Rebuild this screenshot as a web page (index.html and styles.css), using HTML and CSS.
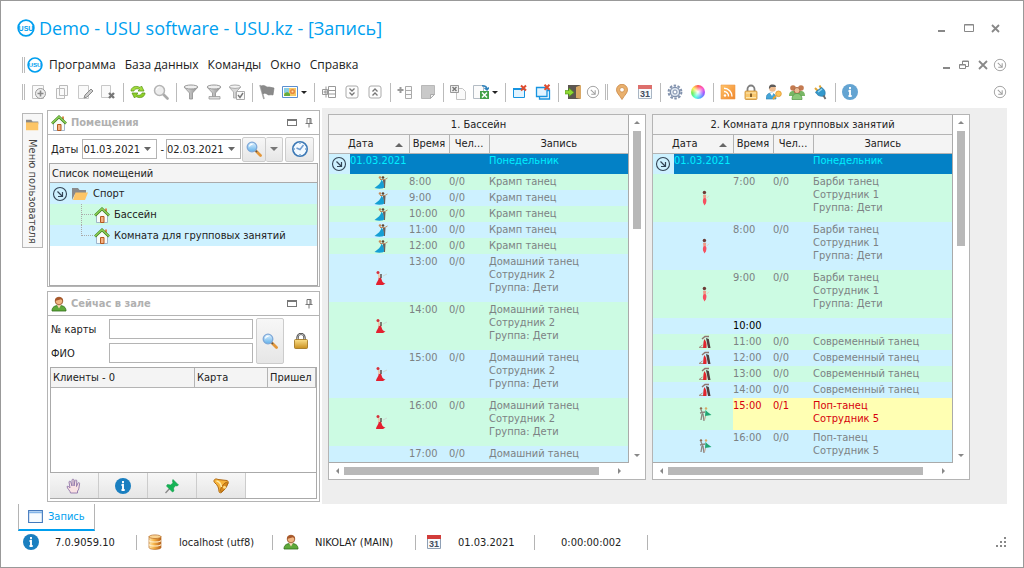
FILE: index.html
```html
<!DOCTYPE html>
<html lang="ru">
<head>
	<meta charset="utf-8">
	<title>Demo - USU software - USU.kz - [Запись]</title>
	<link rel="stylesheet" href="styles.css">
</head>
<body>
	<!-- icon set -->
	<svg class="sprite" aria-hidden="true">
		<defs>
			<linearGradient id="gGold" x1="0" y1="0" x2="0" y2="1"><stop offset="0" stop-color="#fbe08a"/><stop offset="1" stop-color="#c98f1e"/></linearGradient>
			<linearGradient id="gOrange" x1="0" y1="0" x2="1" y2="1"><stop offset="0" stop-color="#ffc46b"/><stop offset="1" stop-color="#f0862b"/></linearGradient>
			<linearGradient id="gDb" x1="0" y1="0" x2="1" y2="0"><stop offset="0" stop-color="#ffe9b8"/><stop offset=".4" stop-color="#f8b548"/><stop offset="1" stop-color="#b9601a"/></linearGradient>
			<linearGradient id="gGrey" x1="0" y1="0" x2="1" y2="0"><stop offset="0" stop-color="#e8e8e8"/><stop offset="1" stop-color="#8c8c8c"/></linearGradient>
			<linearGradient id="gLens" x1="0" y1="0" x2="0" y2="1"><stop offset="0" stop-color="#e4f4ff"/><stop offset="1" stop-color="#5fb0ea"/></linearGradient>
		</defs>
		<symbol id="add" viewBox="0 0 16 16"><path d="M1.5 1.5h11v13h-11z" fill="#fafafa" stroke="#c4c4c4"/><circle cx="9.500" cy="9.500" r="5" fill="#eee" stroke="#999"/><path d="M9.500 6.500v6M6.500 9.500h6" stroke="#8a8a8a" stroke-width="1.600"/></symbol>
		<symbol id="copy" viewBox="0 0 16 16"><path d="M5.500 1.500h8v10h-8zM2.500 4.500h8v10h-8z" fill="#fafafa" stroke="#bbb"/></symbol>
		<symbol id="edit" viewBox="0 0 16 16"><path d="M1.500 1.500h10v13h-10z" fill="#fafafa" stroke="#c8c8c8"/><path d="M7 14l1-3 6-6 2 2-6 6z" fill="#ccc" stroke="#8a8a8a"/></symbol>
		<symbol id="del" viewBox="0 0 16 16"><path d="M1.500 1.500h9v12h-9z" fill="#fafafa" stroke="#c8c8c8"/><path d="M9 9l5 5M14 9l-5 5" stroke="#777" stroke-width="2.400"/></symbol>
		<symbol id="refresh" viewBox="0 0 16 16"><path d="M1 7c0-4 5-6 9-3.500L11.500 2 14 7H8l1.500-1.500C7 4 4.500 5 4 7z" fill="#a5dc3c" stroke="#5d9c1c" stroke-width=".8"/><path d="M15 9c0 4-5 6-9 3.500L4.500 14 2 9h6l-1.500 1.500C9 12 11.500 11 12 9z" fill="#8fcf28" stroke="#5d9c1c" stroke-width=".8"/></symbol>
		<symbol id="find-grey" viewBox="0 0 16 16"><path d="M10.500 10.500l4 4" stroke="#aaa" stroke-width="2.600" stroke-linecap="round"/><circle cx="6.500" cy="6.500" r="5" fill="#ededed" stroke="#b5b5b5" stroke-width="1.500"/><path d="M3.500 6a3 3 0 0 1 3-3" stroke="#fff" fill="none"/></symbol>
		<symbol id="find" viewBox="0 0 16 16"><path d="M9.500 9.500l5 5" stroke="#e3973a" stroke-width="2.800" stroke-linecap="round"/><path d="M9 9l2 2" stroke="#555" stroke-width="1.500"/><circle cx="6" cy="6" r="4.800" fill="url(#gLens)" stroke="#7fa8d8" stroke-width="1.300"/><path d="M3.500 5.500a2.500 2.500 0 0 1 3-2" stroke="#fff" fill="none" stroke-width="1.200"/></symbol>
		<symbol id="funnel" viewBox="0 0 16 16"><path d="M1 3l5.500 6v6h3V9L15 3z" fill="url(#gGrey)" stroke="#8f8f8f" stroke-width=".8"/><ellipse cx="8" cy="3" rx="6.800" ry="2" fill="#efefef" stroke="#999"/></symbol>
		<symbol id="funnel-x" viewBox="0 0 16 16"><path d="M1 3l5.500 6v4h3V9L15 3z" fill="url(#gGrey)" stroke="#8f8f8f" stroke-width=".8"/><ellipse cx="8" cy="3" rx="6.800" ry="2" fill="#efefef" stroke="#999"/><path d="M3 12.500h11v2.500H3z" fill="#ddd" stroke="#999" stroke-width=".8"/></symbol>
		<symbol id="funnel-v" viewBox="0 0 16 16"><path d="M0 3l4.500 5v6h2.500V8L12 3z" fill="#d8d8d8" stroke="#a5a5a5" stroke-width=".8"/><ellipse cx="6" cy="2.700" rx="5.500" ry="1.700" fill="#f4f4f4" stroke="#aaa"/><path d="M7.500 7.500h8v8h-8z" fill="#fafafa" stroke="#aaa"/><path d="M9 11l2 2.500 3-4.500" fill="none" stroke="#777" stroke-width="1.400"/></symbol>
		<symbol id="flag" viewBox="0 0 16 16"><path d="M1 1l4 14" stroke="#a5a5a5" stroke-width="1.600"/><path d="M2 2c4-2 5 2 8 1l5 1-1 7c-3-1-4 1-6-1-2-1-3-1-4 0z" fill="#8a8a8a" stroke="#777" stroke-width=".6"/></symbol>
		<symbol id="image" viewBox="0 0 16 16"><path d="M.5 2.500h15v11H.5z" fill="#fff" stroke="#5b8fd0"/><path d="M2 4h12v8H2z" fill="#f5c863"/><path d="M2 4h5v5H2z" fill="#8ccfe4"/><path d="M2 12c0-4 4-5 6-2v2z" fill="#64ad3d"/><circle cx="10.500" cy="7.500" r="2.600" fill="#e88a45"/><circle cx="10.500" cy="7.500" r="1" fill="#ffe0a0"/></symbol>
		<symbol id="tree-plus" viewBox="0 0 16 16"><path d="M7.500 2.500h7v11h-7zM7.500 6.500h7M7.500 10h7M5 2.500v11M1.500 5.500h5v5h-5zM2.500 8h3M4 6.500v3" fill="none" stroke="#999"/></symbol>
		<symbol id="down2" viewBox="0 0 16 16"><rect x="2" y="2" width="12" height="12" rx="2" fill="#fdfdfd" stroke="#aaa"/><path d="M5.500 4.500L8 7l2.500-2.500M5.500 8.500L8 11l2.500-2.500" fill="none" stroke="#777" stroke-width="1.300"/></symbol>
		<symbol id="up2" viewBox="0 0 16 16"><rect x="2" y="2" width="12" height="12" rx="2" fill="#fdfdfd" stroke="#aaa"/><path d="M5.500 7.500L8 5l2.500 2.500M5.500 11.500L8 9l2.500 2.500" fill="none" stroke="#777" stroke-width="1.300"/></symbol>
		<symbol id="plus-list" viewBox="0 0 16 16"><path d="M3.500 3v6M.5 6h6" stroke="#999" stroke-width="2"/><path d="M8.500 2.500h6v12h-6zM8.500 6.500h6M8.500 10.500h6" fill="#fafafa" stroke="#aaa"/></symbol>
		<symbol id="note" viewBox="0 0 16 16"><path d="M1.500 1.500h13v9l-4 4h-9z" fill="#c9c9c9" stroke="#b8b8b8"/><path d="M14.500 10.500h-4v4z" fill="#f0f0f0" stroke="#aaa"/></symbol>
		<symbol id="xls-grey" viewBox="0 0 16 16"><path d="M6.500 4.500h6l3 3v8h-9z" fill="#fafafa" stroke="#c4c4c4"/><path d="M.5 1.500h8v7h-8z" fill="#eee" stroke="#999"/><path d="M2.500 3l4 4M6.500 3l-4 4" stroke="#777" stroke-width="1.400"/></symbol>
		<symbol id="xls" viewBox="0 0 16 16"><path d="M.5 1.500h10v13H.5z" fill="#fbfbfb" stroke="#b4bcc4"/><path d="M9 1.800c3 0 5 1 5 3.700M11.500 4l2.500 2 2-2.500" fill="none" stroke="#3183bd" stroke-width="1.500"/><path d="M7 7h9v8H7z" fill="#43a047"/><path d="M9 8.500l5 5M14 8.500l-5 5" stroke="#fff" stroke-width="1.500"/></symbol>
		<symbol id="win-x" viewBox="0 0 16 16"><path d="M1.500 5h11v8.500h-11z" fill="#e2f4ff" stroke="#1794e0"/><path d="M1 5h12" stroke="#1794e0" stroke-width="2"/><path d="M9 1.500l5 5M14 1.500l-5 5" stroke="#de4c2f" stroke-width="2"/></symbol>
		<symbol id="wins-x" viewBox="0 0 16 16"><path d="M4.500 6.500h10v8.500h-10z" fill="#fff" stroke="#1794e0" stroke-width="1.300"/><path d="M1.500 3.500h10.500v9H1.500z" fill="#e2f4ff" stroke="#1794e0" stroke-width="1.300"/><path d="M9.500.8l5 5M14.500.8l-5 5" stroke="#de4c2f" stroke-width="2"/></symbol>
		<symbol id="exit" viewBox="0 0 16 16"><path d="M3 1h12v14H3z" fill="#5c5650"/><path d="M11 3l5-2v14l-5-1z" fill="#d9a866"/><path d="M0 6.500h4V4l5 4.500-5 4V10H0z" fill="#8ed832" stroke="#4e9414" stroke-width=".6"/></symbol>
		<symbol id="arrow-se" viewBox="0 0 16 16"><circle cx="8" cy="8" r="6.500" fill="none" stroke="currentColor" stroke-width="1.100"/><path d="M5.500 5.500l4.500 4.500M10.500 6v4.500H6" fill="none" stroke="currentColor" stroke-width="1.200"/></symbol>
		<symbol id="pin-map" viewBox="0 0 16 16"><path d="M8 15.500C5 10.500 2.500 9 2.500 5.800a5.500 5.500 0 0 1 11 0C13.500 9 11 10.500 8 15.500z" fill="#e9b06d" stroke="#c98744" stroke-width=".8"/><circle cx="8" cy="5.800" r="2.300" fill="#fff" stroke="#c98744" stroke-width=".7"/></symbol>
		<symbol id="gear" viewBox="0 0 16 16"><circle cx="8" cy="8" r="6.400" fill="none" stroke="#8292ad" stroke-width="2" stroke-dasharray="2.500 1.500"/><circle cx="8" cy="8" r="4.700" fill="#dde5ef" stroke="#7f90ad" stroke-width="1.300"/><circle cx="8" cy="8" r="2" fill="#fff" stroke="#7f90ad"/></symbol>
		<symbol id="rss" viewBox="0 0 16 16"><path d="M1 1h14v14H1z" fill="url(#gOrange)" stroke="#ee9c4a" stroke-width=".6"/><circle cx="5" cy="11.500" r="1.200" fill="#fff"/><path d="M4 7.500a4.500 4.500 0 0 1 4.500 5M4 4.300a8 8 0 0 1 8 8.200" fill="none" stroke="#fff" stroke-width="1.400"/></symbol>
		<symbol id="lock" viewBox="0 0 16 16"><path d="M4.500 8V5a3.500 3.500 0 0 1 7 0v3" fill="none" stroke="#7e7e7e" stroke-width="1.800"/><rect x="2" y="7" width="12" height="8.500" rx="1" fill="#f8c66c" stroke="#c98d32" stroke-width=".8"/><path d="M3 9h10M3 13.500h10" stroke="#fde7b0"/><path d="M8 9.500v3.500" stroke="#7a5520" stroke-width="1.800"/></symbol>
		<symbol id="lock-gold" viewBox="0 0 16 16"><path d="M4.500 8V4.500a3.500 3.500 0 0 1 7 0V8" fill="none" stroke="#333" stroke-width="2.200"/><path d="M4.500 8V4.500a3.500 3.500 0 0 1 7 0V8" fill="none" stroke="#ddd" stroke-width=".8"/><rect x="1.500" y="6.500" width="13" height="9" rx="1" fill="url(#gGold)" stroke="#9b6f18" stroke-width=".8"/></symbol>
		<symbol id="user-key" viewBox="0 0 16 16"><path d="M0 15c0-4 2-6 5-6s5 2 5 6z" fill="#45a5d8" stroke="#2d7fae" stroke-width=".6"/><path d="M4 9l2 3 1.500-3z" fill="#fff"/><circle cx="6.500" cy="4.500" r="3.300" fill="#eebc90"/><path d="M3 5c-.5-4 2-5 4-4.500 2 0 3 1 3 2.500L5 3z" fill="#5d5b5a"/><path d="M10 12l-3 3" stroke="#e6a532" stroke-width="2"/><circle cx="12.500" cy="9.800" r="2.800" fill="#ffc55a" stroke="#dd942c" stroke-width=".8"/></symbol>
		<symbol id="users" viewBox="0 0 16 16"><circle cx="4" cy="4" r="2.800" fill="#c47a50"/><circle cx="12" cy="4" r="2.800" fill="#c47a50"/><path d="M0 12c0-4 2-5 4-5h8c2 0 4 1 4 5z" fill="#78b665"/><circle cx="8" cy="6.500" r="3" fill="#eebb95" stroke="#a96743"/><path d="M3 15.500c0-4 2-6 5-6s5 2 5 6z" fill="#8bc878" stroke="#4d9442" stroke-width=".7"/></symbol>
		<symbol id="plug" viewBox="0 0 16 16"><path d="M3 4l3 3M7.500 1.500l2 3.500" stroke="#e2a736" stroke-width="2"/><path d="M3.500 8l6-4.500c3.500 2 4.500 5 3 8.500-4 1-7.500-.5-9-4z" fill="#3399cc" stroke="#2470a0" stroke-width=".7"/><path d="M6 8l4-3" stroke="#9bd8ef" stroke-width="1.500"/><path d="M11.500 11.500l2 3.500" stroke="#6c6c6c" stroke-width="1.800"/></symbol>
		<symbol id="info" viewBox="0 0 16 16"><circle cx="8" cy="8" r="8" fill="currentColor"/><path d="M8 3v2.200M6.500 7H8v5M6.500 12h3.200" fill="none" stroke="#fff" stroke-width="1.900"/></symbol>
		<symbol id="house" viewBox="0 0 16 16"><path d="M2.500 8v7.500h11V8L8 3z" fill="#f8fbf8" stroke="#8fa4c0" stroke-width=".8"/><path d="M11 1.500h2V5h-2z" fill="#d98951"/><path d="M1 8.500L8 1.800l7 6.700" fill="none" stroke="#438321" stroke-width="2.600"/><path d="M1 8.200l7-6.500 7 6.500" fill="none" stroke="#8ed257" stroke-width="1.300"/><path d="M6.500 9.500h3.500v6H6.500z" fill="#f4b183" stroke="#b45a1f"/></symbol>
		<symbol id="folder" viewBox="0 0 18 16"><path d="M1 2h6l1.500 2H15v4H1z" fill="#8a8a8a"/><path d="M1 2v12l3-6z" fill="#8a8a8a"/><path d="M4.500 6.500H17L14 14H2z" fill="#fdc566"/></symbol>
		<symbol id="folder2" viewBox="0 0 16 12"><path d="M0 0h6l1.500 2H14v3H0z" fill="#8a8a8a"/><path d="M0 3h14v9H0z" fill="#fdc566"/></symbol>
		<symbol id="user" viewBox="0 0 16 16"><path d="M1 15c0-4 2.500-5.500 7-5.500S15 11 15 15z" fill="#5fa93a" stroke="#2e6c16" stroke-width=".8"/><path d="M6 9h4l-2 3.500z" fill="#f8d9b6"/><circle cx="8" cy="5" r="3.800" fill="#f1b583" stroke="#8d4a20" stroke-width=".8"/><path d="M4 5C3.500 0 12.500 0 12 5L10 3.200z" fill="#a8572a"/></symbol>
		<symbol id="clock" viewBox="0 0 18 18"><circle cx="9" cy="9" r="7.200" fill="#f2f9ff" stroke="#3b78b5" stroke-width="1.600"/><path d="M12.500 5L9 9.500 5.500 8" fill="none" stroke="#6f9cd0" stroke-width="1.500"/><path d="M9 3v1M9 14v1M3 9h1M14 9h1" stroke="#3b78b5"/></symbol>
		<symbol id="hand" viewBox="0 0 16 16"><path d="M4.500 15c0-2-3.500-4.500-3.500-6.500 1.200-.8 2 .5 3 1.500L3 4c.2-1.200 1.600-1 1.800 0L6 8V2c.3-1.200 1.700-1.200 2 0v6l1-5.500c.5-1 1.800-.7 1.800.5L10.500 8.500 12 5c.7-.8 1.800-.3 1.600.7C13 9 13 12 11.500 13v2z" fill="#f9e2e4" stroke="#8f74a8" stroke-width=".9"/></symbol>
		<symbol id="pushpin" viewBox="0 0 16 16"><path d="M1.500 15L7 9" stroke="#888" stroke-width="1.300"/><path d="M9 1.500l5.500 5.500-1.500 1-1.500-.3-2 2.300.4 3-1.400 1L2.500 8l1-1.500 3 .5 2.500-2-.5-2z" fill="#14b455" stroke="#0f9a48" stroke-width=".6"/></symbol>
		<symbol id="bell" viewBox="0 0 16 16"><path d="M1 2.500C1.500.8 3.500.5 5 1.500l9 1c1.500.7 1.500 2 1 3.200L9 14c-1 1.300-2.800 1-3-.5C6 10 4.500 7 2 5 1 4.200.8 3.300 1 2.500z" fill="#f6b33a" stroke="#b06a14"/><ellipse cx="11" cy="9" rx="5.600" ry="2" transform="rotate(-55 11 9)" fill="#d98a1c" stroke="#a66412" stroke-width=".8"/><circle cx="11.500" cy="9.300" r="1.500" fill="#ffe08a"/><path d="M3.500 3c3 .5 4.500 3 5 6" stroke="#ffeaa6" stroke-width="1.500" fill="none"/></symbol>
		<symbol id="db" viewBox="0 0 16 16"><path d="M2 2.500v11c0 2.500 12 2.500 12 0v-11z" fill="url(#gDb)" stroke="#b56a22" stroke-width=".7"/><ellipse cx="8" cy="2.700" rx="6" ry="1.800" fill="#fbd593" stroke="#b56a22" stroke-width=".7"/><path d="M2 6.500c1 2 11 2 12 0M2 10.500c1 2 11 2 12 0" fill="none" stroke="#fff1cf" stroke-width="1.200"/></symbol>
		<symbol id="form" viewBox="0 0 16 14"><path d="M.6.600h14.800v12.800H.6z" fill="#f6fbff" stroke="#4379bd" stroke-width="1.200"/><path d="M1 2.500h14" stroke="#82b4e8" stroke-width="2"/></symbol>
		<symbol id="pin-small" viewBox="0 0 8 10"><path d="M2 .500h4v5M2 .500v5M5 .500v5M.5 5.500h7M4 5.500V9.500" fill="none" stroke="#777"/></symbol>
		<symbol id="dance1" viewBox="0 0 14 14"><path d="M9 5l2.500 0L11 13H9.500z" fill="#6a5f5a"/><path d="M7.500 4.500C7 8 4 10.500.5 13c4 1 8 1 9.500-.5C10 9 9.500 7 7.500 4.500z" fill="#159fd4"/><circle cx="6" cy="2.500" r="1.300" fill="#c98a55"/><circle cx="9" cy="2.500" r="1.300" fill="#5d4330"/><path d="M6 4.500h5l2.500-1.500" stroke="#b58c68" fill="none"/></symbol>
		<symbol id="dance2" viewBox="0 0 14 16"><path d="M4.500 7.500c.5 3-2 4-2.500 7.500h7l2.500-1.500C8.500 13 8 11 7 7.500z" fill="#e3202f"/><path d="M4.500 4L5.500 8" stroke="#edc4a8" stroke-width="1.800"/><circle cx="4" cy="2.500" r="1.500" fill="#d6303a"/><path d="M7 4v4" stroke="#5a4540" stroke-width="1.400"/><path d="M9 6l4-2" stroke="#d0d8d4"/></symbol>
		<symbol id="dance3" viewBox="0 0 8 14"><circle cx="3.500" cy="2.200" r="1.500" fill="#6d3b36"/><path d="M2.300 4.200h2.700L4.700 8H2.600z" fill="#f09a88"/><path d="M3.800 7c1.600 0 1.800 2.500 1 4.500L3.500 13.500 2.300 11C1.800 9 2.300 7 3.800 7z" fill="#f65060"/><path d="M5.500 7l2-2" stroke="#e5c5b5" stroke-width=".7"/></symbol>
		<symbol id="dance4" viewBox="0 0 14 14"><path d="M8 3l2.800 1L12.500 13h-2.500z" fill="#4f403f"/><path d="M6.500 4c1 2 2.500 3 2 9H5C5.500 9 5 7 6.500 4z" fill="#e0252d"/><path d="M4 4l3-2.500h4" stroke="#907570" stroke-width="1.500" fill="none"/><path d="M4.500 10L1 12.500h4" stroke="#a49888" fill="none"/></symbol>
		<symbol id="dance5" viewBox="0 0 14 16"><path d="M3 4l2 4M2 7l5-1M4 8l-1 6M5 8l1 7" stroke="#8c8580" stroke-width="1.300"/><circle cx="3" cy="2.500" r="1.200" fill="#8b6a50"/><circle cx="8" cy="2.500" r="1.200" fill="#d6aa66"/><path d="M7.500 4l2 2 4 3L7 10z" fill="#20a673"/><path d="M7.500 10l-1 4" stroke="#c1a18c"/></symbol>
	</svg>

	<header class="titlebar">
		<svg class="icon18" viewBox="0 0 18 18"><circle cx="9" cy="9" r="7.800" fill="#fff" stroke="#009fef" stroke-width="1.800"/><text x="9" y="11.500" text-anchor="middle" class="logo-text">USU</text></svg>
		<h1>Demo - USU software - USU.kz - [Запись]</h1>
		<div class="winbtns">
			<button type="button" aria-label="Свернуть"><svg viewBox="0 0 10 10"><path d="M1 8h7" stroke-width="2"/></svg></button>
			<button type="button" aria-label="Развернуть"><svg viewBox="0 0 10 10"><path d="M.5 1.500h9v7h-9zM.5 2h9"/></svg></button>
			<button type="button" aria-label="Закрыть"><svg viewBox="0 0 10 10"><path d="M1 2l7 7M8 2L1 9" stroke-width="1.800"/></svg></button>
		</div>
	</header>

	<nav class="menu">
		<span class="grip"></span>
		<svg class="icon16" viewBox="0 0 18 18"><circle cx="9" cy="9" r="7.800" fill="#fff" stroke="#009fef" stroke-width="1.800"/><text x="9" y="11.500" text-anchor="middle" class="logo-text">USU</text></svg>
		<a href="#">Программа</a>
		<a href="#">База данных</a>
		<a href="#">Команды</a>
		<a href="#">Окно</a>
		<a href="#">Справка</a>
		<div class="mdibtns">
			<button type="button" aria-label="Свернуть окно"><svg viewBox="0 0 10 10"><path d="M3 8h7" stroke-width="2"/></svg></button>
			<button type="button" aria-label="Восстановить окно"><svg viewBox="0 0 10 10"><path d="M.5 4.500h6v4h-6zM3.500 4V1h6v5.500H7M3.500 1.500h6M.5 5h6"/></svg></button>
			<button type="button" aria-label="Закрыть окно"><svg viewBox="0 0 10 10"><path d="M1 1l8 8M9 1L1 9" stroke-width="1.800"/></svg></button>
			<button type="button" class="more" aria-label="Ещё"><svg><use href="#arrow-se"/></svg></button>
		</div>
	</nav>

	<div class="toolbar">
		<span class="grip"></span>
		<button type="button" aria-label="Добавить"><svg><use href="#add"/></svg></button>
		<button type="button" aria-label="Копировать"><svg><use href="#copy"/></svg></button>
		<button type="button" aria-label="Изменить"><svg><use href="#edit"/></svg></button>
		<button type="button" aria-label="Удалить"><svg><use href="#del"/></svg></button>
		<span class="sep"></span>
		<button type="button" aria-label="Обновить"><svg><use href="#refresh"/></svg></button>
		<button type="button" aria-label="Поиск"><svg><use href="#find-grey"/></svg></button>
		<span class="sep"></span>
		<button type="button" aria-label="Фильтр"><svg><use href="#funnel"/></svg></button>
		<button type="button" aria-label="Фильтр по значению"><svg><use href="#funnel-x"/></svg></button>
		<button type="button" aria-label="Применить фильтр"><svg><use href="#funnel-v"/></svg></button>
		<span class="sep"></span>
		<button type="button" aria-label="Флаг"><svg><use href="#flag"/></svg></button>
		<button type="button" class="drop" aria-label="Изображение"><svg><use href="#image"/></svg></button>
		<span class="sep"></span>
		<button type="button" aria-label="Группировка"><svg><use href="#tree-plus"/></svg></button>
		<button type="button" aria-label="Развернуть все"><svg><use href="#down2"/></svg></button>
		<button type="button" aria-label="Свернуть все"><svg><use href="#up2"/></svg></button>
		<span class="sep"></span>
		<button type="button" aria-label="Добавить строку"><svg><use href="#plus-list"/></svg></button>
		<button type="button" aria-label="Заметка"><svg><use href="#note"/></svg></button>
		<span class="sep"></span>
		<button type="button" aria-label="Импорт"><svg><use href="#xls-grey"/></svg></button>
		<button type="button" class="drop" aria-label="Экспорт"><svg><use href="#xls"/></svg></button>
		<span class="sep"></span>
		<button type="button" aria-label="Закрыть вкладку"><svg><use href="#win-x"/></svg></button>
		<button type="button" aria-label="Закрыть все вкладки"><svg><use href="#wins-x"/></svg></button>
		<span class="sep"></span>
		<button type="button" aria-label="Выход"><svg><use href="#exit"/></svg></button>
		<button type="button" class="more" aria-label="Ещё"><svg><use href="#arrow-se"/></svg></button>
		<span class="grip"></span>
		<button type="button" aria-label="Карта"><svg><use href="#pin-map"/></svg></button>
		<button type="button" aria-label="Календарь"><svg viewBox="0 0 16 16"><path d="M1.500 2.500h13v12h-13z" fill="#f7fafd" stroke="#a9b5c3"/><path d="M1 1h14v4H1z" fill="#dd6f6c"/><text x="8" y="13" text-anchor="middle" class="cal-text">31</text></svg></button>
		<span class="sep"></span>
		<button type="button" aria-label="Настройки"><svg><use href="#gear"/></svg></button>
		<button type="button" aria-label="Цвета"><span class="wheel"></span></button>
		<span class="sep"></span>
		<button type="button" aria-label="Новости"><svg><use href="#rss"/></svg></button>
		<button type="button" aria-label="Блокировка"><svg><use href="#lock"/></svg></button>
		<button type="button" aria-label="Права доступа"><svg><use href="#user-key"/></svg></button>
		<button type="button" aria-label="Пользователи"><svg><use href="#users"/></svg></button>
		<button type="button" aria-label="Подключение"><svg><use href="#plug"/></svg></button>
		<span class="sep"></span>
		<button type="button" class="info" aria-label="О программе"><svg><use href="#info"/></svg></button>
		<button type="button" class="more last" aria-label="Ещё"><svg><use href="#arrow-se"/></svg></button>
	</div>

	<main class="work">
		<button type="button" class="side-tab"><svg><use href="#folder2"/></svg><span>Меню пользователя</span></button>

		<aside class="docks">
			<section class="dock rooms">
				<div class="dock-head">
					<svg class="icon16"><use href="#house"/></svg>
					<h2>Помещения</h2>
					<span class="box"></span>
					<svg class="pin"><use href="#pin-small"/></svg>
				</div>
				<div class="dates">
					<label for="from">Даты</label>
					<select id="from"><option>01.03.2021</option></select>
					<label for="to">-</label>
					<select id="to"><option>02.03.2021</option></select>
					<div class="split">
						<button type="button" class="btn" aria-label="Найти"><svg class="icon16"><use href="#find"/></svg></button>
						<button type="button" class="btn arrow" aria-label="Варианты поиска"><span class="caret"></span></button>
					</div>
					<button type="button" class="btn clock" aria-label="Сейчас"><svg class="icon18"><use href="#clock"/></svg></button>
				</div>
				<div class="tree">
					<div class="tree-head">Список помещений</div>
					<ul>
						<li class="root"><svg class="icon16"><use href="#arrow-se"/></svg><svg class="icon18"><use href="#folder"/></svg>Спорт</li>
						<li class="leaf"><span class="branch"></span><svg class="icon16"><use href="#house"/></svg>Бассейн</li>
						<li class="leaf end"><span class="branch"></span><svg class="icon16"><use href="#house"/></svg>Комната для групповых занятий</li>
					</ul>
				</div>
			</section>

			<section class="dock now">
				<div class="dock-head">
					<svg class="icon16"><use href="#user"/></svg>
					<h2>Сейчас в зале</h2>
					<span class="box"></span>
					<svg class="pin"><use href="#pin-small"/></svg>
				</div>
				<div class="lookup">
					<div class="fields">
						<label for="card">№ карты</label>
						<input type="text" id="card">
						<label for="fio">ФИО</label>
						<input type="text" id="fio">
					</div>
					<button type="button" class="btn tall" aria-label="Найти"><svg class="icon16"><use href="#find"/></svg></button>
					<svg class="icon16 padlock"><use href="#lock-gold"/></svg>
				</div>
				<div class="clients">
					<table>
						<colgroup><col><col class="c-card"><col class="c-came"></colgroup>
						<tr><th>Клиенты - 0</th><th>Карта</th><th>Пришел</th></tr>
					</table>
				</div>
				<div class="actions">
					<button type="button" class="btn" aria-label="Стоп"><svg class="icon16"><use href="#hand"/></svg></button>
					<button type="button" class="btn" aria-label="Информация"><svg class="icon16"><use href="#info"/></svg></button>
					<button type="button" class="btn" aria-label="Закрепить"><svg class="icon16"><use href="#pushpin"/></svg></button>
					<button type="button" class="btn" aria-label="Напомнить"><svg class="icon16"><use href="#bell"/></svg></button>
				</div>
			</section>
		</aside>

		<div class="boards">
			<section class="board">
				<div class="view">
					<table>
						<colgroup><col class="c-exp"><col class="c-date"><col class="c-time"><col class="c-time"><col></colgroup>
						<thead>
							<tr><th colspan="5">1. Бассейн</th></tr>
							<tr><th colspan="2" class="sorted">Дата<i></i></th><th>Время</th><th>Чел...</th><th>Запись</th></tr>
						</thead>
						<tbody>
							<tr class="day"><td><svg class="icon16"><use href="#arrow-se"/></svg></td><td colspan="3">01.03.2021</td><td>Понедельник</td></tr>
							<tr><td colspan="2" class="pic"><svg><use href="#dance1"/></svg></td><td>8:00</td><td>0/0</td><td>Крамп танец</td></tr>
							<tr><td colspan="2" class="pic"><svg><use href="#dance1"/></svg></td><td>9:00</td><td>0/0</td><td>Крамп танец</td></tr>
							<tr><td colspan="2" class="pic"><svg><use href="#dance1"/></svg></td><td>10:00</td><td>0/0</td><td>Крамп танец</td></tr>
							<tr><td colspan="2" class="pic"><svg><use href="#dance1"/></svg></td><td>11:00</td><td>0/0</td><td>Крамп танец</td></tr>
							<tr><td colspan="2" class="pic"><svg><use href="#dance1"/></svg></td><td>12:00</td><td>0/0</td><td>Крамп танец</td></tr>
							<tr class="x3"><td colspan="2" class="pic"><svg><use href="#dance2"/></svg></td><td>13:00</td><td>0/0</td><td>Домашний танец<br>Сотрудник 2<br>Группа: Дети</td></tr>
							<tr class="x3"><td colspan="2" class="pic"><svg><use href="#dance2"/></svg></td><td>14:00</td><td>0/0</td><td>Домашний танец<br>Сотрудник 2<br>Группа: Дети</td></tr>
							<tr class="x3"><td colspan="2" class="pic"><svg><use href="#dance2"/></svg></td><td>15:00</td><td>0/0</td><td>Домашний танец<br>Сотрудник 2<br>Группа: Дети</td></tr>
							<tr class="x3"><td colspan="2" class="pic"><svg><use href="#dance2"/></svg></td><td>16:00</td><td>0/0</td><td>Домашний танец<br>Сотрудник 2<br>Группа: Дети</td></tr>
							<tr><td colspan="2"></td><td>17:00</td><td>0/0</td><td>Домашний танец</td></tr>
						</tbody>
					</table>
				</div>
				<div class="vscroll"><i class="up"></i><b></b><i class="down"></i></div>
				<div class="hscroll"><i class="left"></i><b></b><i class="right"></i></div>
			</section>

			<section class="board">
				<div class="view">
					<table>
						<colgroup><col class="c-exp"><col class="c-date"><col class="c-time"><col class="c-time"><col></colgroup>
						<thead>
							<tr><th colspan="5">2. Комната для групповых занятий</th></tr>
							<tr><th colspan="2" class="sorted">Дата<i></i></th><th>Время</th><th>Чел...</th><th>Запись</th></tr>
						</thead>
						<tbody>
							<tr class="day"><td><svg class="icon16"><use href="#arrow-se"/></svg></td><td colspan="3">01.03.2021</td><td>Понедельник</td></tr>
							<tr class="x3"><td colspan="2" class="pic"><svg><use href="#dance3"/></svg></td><td>7:00</td><td>0/0</td><td>Барби танец<br>Сотрудник 1<br>Группа: Дети</td></tr>
							<tr class="x3"><td colspan="2" class="pic"><svg><use href="#dance3"/></svg></td><td>8:00</td><td>0/0</td><td>Барби танец<br>Сотрудник 1<br>Группа: Дети</td></tr>
							<tr class="x3"><td colspan="2" class="pic"><svg><use href="#dance3"/></svg></td><td>9:00</td><td>0/0</td><td>Барби танец<br>Сотрудник 1<br>Группа: Дети</td></tr>
							<tr class="free"><td colspan="2"></td><td>10:00</td><td></td><td></td></tr>
							<tr><td colspan="2" class="pic"><svg><use href="#dance4"/></svg></td><td>11:00</td><td>0/0</td><td>Современный танец</td></tr>
							<tr><td colspan="2" class="pic"><svg><use href="#dance4"/></svg></td><td>12:00</td><td>0/0</td><td>Современный танец</td></tr>
							<tr><td colspan="2" class="pic"><svg><use href="#dance4"/></svg></td><td>13:00</td><td>0/0</td><td>Современный танец</td></tr>
							<tr><td colspan="2" class="pic"><svg><use href="#dance4"/></svg></td><td>14:00</td><td>0/0</td><td>Современный танец</td></tr>
							<tr class="x2 busy"><td colspan="2" class="pic"><svg><use href="#dance5"/></svg></td><td>15:00</td><td>0/1</td><td>Поп-танец<br>Сотрудник 5</td></tr>
							<tr class="x2"><td colspan="2" class="pic"><svg><use href="#dance5"/></svg></td><td>16:00</td><td>0/0</td><td>Поп-танец<br>Сотрудник 5</td></tr>
						</tbody>
					</table>
				</div>
				<div class="vscroll"><i class="up"></i><b class="long"></b><i class="down"></i></div>
				<div class="hscroll"><i class="left"></i><b></b><i class="right"></i></div>
			</section>
		</div>
	</main>

	<div class="tabs">
		<button type="button" class="tab"><svg><use href="#form"/></svg>Запись</button>
	</div>

	<footer class="status">
		<div class="s-version"><svg class="icon16 blue"><use href="#info"/></svg><span>7.0.9059.10</span></div>
		<div class="s-db"><svg class="icon16"><use href="#db"/></svg><span>localhost (utf8)</span></div>
		<div class="s-user"><svg class="icon16"><use href="#user"/></svg><span>NIKOLAY (MAIN)</span></div>
		<div class="s-date"><svg class="icon16" viewBox="0 0 16 16"><path d="M1.500 2.500h13v12h-13z" fill="#f7fafd" stroke="#8fa0b5"/><path d="M1 1h14v4H1z" fill="#d23c3a"/><text x="8" y="13" text-anchor="middle" class="cal-text">31</text></svg><span>01.03.2021</span></div>
		<div class="s-timer"><span>0:00:00:002</span></div>
		<svg class="resize" viewBox="0 0 12 12"><path d="M9 1h2v2H9zM5 5h2v2H5zM9 5h2v2H9zM1 9h2v2H1zM5 9h2v2H5zM9 9h2v2H9z"/></svg>
	</footer>
</body>
</html>
```
FILE: styles.css
```css
* {
	box-sizing: border-box;
}

body {
	display: flex;
	flex-direction: column;
	margin: 0;
	min-height: 100vh;
	padding: 0 16px 14px 16px;
	border: 1px solid #999;
	background: #fff;
	color: #222;
	font: 11px/13px "DejaVu Sans Condensed", "DejaVu Sans", sans-serif;
}

button, select, input {
	margin: 0;
	padding: 0;
	border: 0;
	background: none;
	color: inherit;
	font: inherit;
}

h1, h2 {
	margin: 0;
	font-weight: normal;
}

table {
	width: 100%;
	border-collapse: collapse;
	table-layout: fixed;
}

svg {
	display: block;
	flex: none;
}

.sprite {
	position: absolute;
	width: 0;
	height: 0;
}

.icon16 {
	width: 16px;
	height: 16px;
}

.icon18 {
	width: 18px;
	height: 18px;
}

.logo-text {
	fill: #009fef;
	font: bold 7px "Liberation Sans", sans-serif;
}

.cal-text {
	fill: #444d5c;
	font: bold 9px "Liberation Sans", sans-serif;
}

/* title */

.titlebar {
	display: flex;
	align-items: center;
	gap: 4px;
	height: 53px;
	color: #009fef;
}

.titlebar h1 {
	flex: 1;
	font: 18px/26px "Open Sans", "Noto Sans", sans-serif;
}

.winbtns {
	display: flex;
	gap: 17px;
	padding-right: 6px;
}

.winbtns svg, .mdibtns svg {
	width: 10px;
	height: 10px;
	fill: none;
	stroke: #888;
}

/* menu */

.menu {
	display: flex;
	align-items: center;
	height: 22px;
	padding-left: 5px;
	font: 12px/16px "Open Sans", "Noto Sans", sans-serif;
}

.menu a {
	margin-right: 9px;
	color: #222;
	text-decoration: none;
}

.menu .icon16 {
	margin: 0 6px 0 1px;
}

.grip {
	width: 4px;
	height: 16px;
	border: solid #bbb;
	border-width: 0 1px;
	border-right-color: #fff;
	background: linear-gradient(90deg, #fff 1px, #bbb 1px, #bbb 2px, #fff 2px);
}

.mdibtns {
	display: flex;
	align-items: center;
	gap: 9px;
	margin-left: auto;
}

.mdibtns .more {
	margin-left: -4px;
}

.more svg, .toolbar .more svg {
	width: 14px;
	height: 14px;
}

.more {
	color: #a0a0a0;
}

.mdibtns .more svg {
	width: 14px;
	height: 14px;
	stroke: none;
}

/* toolbar */

.toolbar {
	display: flex;
	align-items: center;
	gap: 7px;
	height: 32px;
	padding-left: 5px;
}

.toolbar .grip {
	margin-right: -2px;
}

.toolbar svg {
	width: 16px;
	height: 16px;
}

.toolbar .more {
	margin: 0 -2px;
}

.toolbar .last {
	margin: 0 0 0 auto;
}

.toolbar .info {
	color: #64a4d2;
}

.sep {
	width: 1px;
	height: 19px;
	margin-right: -1px;
	background: #bbb;
}

.drop {
	display: flex;
	align-items: center;
	gap: 3px;
	width: 25px;
}

.drop::after, .caret {
	content: "";
	border: solid transparent;
	border-width: 3px 3px 0;
	border-top-color: #222;
}

.wheel {
	display: block;
	width: 14px;
	height: 14px;
	margin: 1px;
	border-radius: 50%;
	background: radial-gradient(#fff, transparent 60%), conic-gradient(#f55, #f5c, #95f, #5af, #5fd, #6e5, #fe5, #f55);
}

/* work area */

.work {
	display: flex;
	flex: 1;
	min-height: 396px;
}

.side-tab {
	display: flex;
	align-items: center;
	align-self: flex-start;
	writing-mode: vertical-rl;
	gap: 8px;
	width: 21px;
	margin: 5px 4px 0 5px;
	padding: 5px 0 3px;
	border: 1px solid #b8b8b8;
	background: #f7f7f7;
	color: #444;
}

.side-tab svg {
	width: 14px;
	height: 12px;
}

.docks {
	display: flex;
	flex-direction: column;
	gap: 4px;
	width: 273px;
	padding: 2px 0 2px;
}

.dock {
	display: flex;
	flex-direction: column;
	border: 1px solid #b4b4b4;
}

.rooms {
	height: 177px;
}

.now {
	flex: 1;
}

.dock-head {
	display: flex;
	align-items: center;
	height: 24px;
	padding: 0 6px 0 3px;
	border-bottom: 1px solid #b4b4b4;
}

.dock-head h2 {
	flex: 1;
	padding-left: 4px;
	color: #b0b0b0;
	font: bold 11px/13px "DejaVu Sans Condensed", sans-serif;
}

.dock-head .box {
	width: 10px;
	height: 7px;
	border: 1px solid #777;
	border-top-width: 2px;
}

.dock-head .pin {
	width: 8px;
	height: 10px;
	margin-left: 8px;
}

.dates {
	display: flex;
	align-items: center;
	height: 28px;
	padding: 0 5px 0 3px;
}

.dates label {
	padding-right: 4px;
}

.dates select {
	width: 75px;
	height: 20px;
	border: 1px solid #b4b4b4;
	appearance: none;
	background: url("data:image/svg+xml,%3Csvg xmlns='http://www.w3.org/2000/svg' width='7' height='4'%3E%3Cpath d='M0 0h7L3.500 4z' fill='%23666'/%3E%3C/svg%3E") no-repeat right 5px center;
}

.dates select + label {
	padding: 0 2px 0 3px;
}

.btn {
	display: flex;
	align-items: center;
	justify-content: center;
	border: 1px solid #ccc;
	border-radius: 2px;
	background: linear-gradient(#f7f7f7, #e6e6e6);
}

.split {
	display: flex;
	margin-left: 1px;
}

.split .btn, .clock {
	width: 24px;
	height: 25px;
}

.split .arrow {
	width: 17px;
	border-left: 0;
}

.caret {
	border-width: 4px 4px 0;
	border-top-color: #777;
}

.dates .clock {
	width: 29px;
	margin-left: auto;
}

.tree {
	flex: 1;
	margin: 0 1px;
	border: 1px solid #aaa;
}

.tree-head {
	padding: 3px 2px 2px;
	border-bottom: 1px solid #aaa;
	background: #f4f4f4;
}

.tree ul {
	margin: 0;
	padding: 0;
	list-style: none;
}

.tree li {
	display: flex;
	align-items: center;
	height: 21px;
	background: #cdf1ff;
}

.tree li:nth-child(even) {
	background: #ccfbe3;
}

.root .icon18 {
	margin: 0 4px 0 3px;
}

.root .icon16 {
	margin-left: 2px;
	color: #345;
}

.leaf {
	padding-left: 31px;
}

.leaf .icon16 {
	margin: 0 4px 0 1px;
}

.branch {
	align-self: stretch;
	width: 12px;
	border-left: 1px dotted #aaa;
	background: linear-gradient(90deg, #aaa 50%, transparent 50%) 0 10px / 2px 1px repeat-x;
}

.end .branch {
	height: 11px;
	align-self: flex-start;
}

/* visitors */

.lookup {
	display: flex;
	align-items: center;
	padding: 2px 10px 2px 3px;
}

.fields {
	display: grid;
	flex: 1;
	grid-template-columns: 58px 1fr;
	align-items: center;
	row-gap: 4px;
}

.fields input {
	width: 100%;
	height: 20px;
	border: 1px solid #b4b4b4;
}

.tall {
	width: 28px;
	height: 46px;
	margin: 0 9px 0 3px;
}

.clients {
	flex: 1;
	margin: 1px 2px 0;
	border: 1px solid #aaa;
}

.clients th {
	height: 19px;
	padding: 1px 2px 0;
	border: solid #b4b4b4;
	border-width: 0 1px 1px 0;
	background: #f4f4f4;
	font-weight: normal;
	text-align: left;
}

.c-card {
	width: 73px;
}

.c-came {
	width: 48px;
}

.actions {
	display: flex;
	height: 26px;
	margin: 0 2px 2px;
	border: solid #aaa;
	border-width: 0 1px 1px 0;
}

.actions .btn {
	width: 49px;
	border-color: #ccc;
	border-width: 0 1px 0 0;
	border-radius: 0;
}

.actions .btn, .blue {
	color: #1a7fc0;
}

/* schedule grids */

.boards {
	display: grid;
	flex: 1;
	grid-template-columns: 1fr 1fr;
	gap: 6px;
	margin-left: 2px;
	padding: 6px 37px 24px 6px;
	background: #eee;
}

.board {
	display: grid;
	grid-template-columns: 1fr 16px;
	grid-template-rows: 1fr 16px;
	border: 1px solid #b4b4b4;
	background: #fff;
}

.view {
	overflow: hidden;
	border: solid #aaa;
	border-width: 0 1px 1px 0;
}

.c-exp {
	width: 21px;
}

.c-date {
	width: 59px;
}

.c-time {
	width: 40px;
}

.board th {
	position: relative;
	height: 19px;
	padding: 0;
	border-right: 1px solid #b4b4b4;
	border-bottom: 1px solid #b4b4b4;
	background: #f4f4f4;
	font-weight: normal;
	white-space: nowrap;
}

.board th:last-child {
	border-right: 0;
}

.board .sorted {
	padding-right: 16px;
}

.sorted i {
	position: absolute;
	top: 8px;
	right: 6px;
	border: solid transparent;
	border-width: 0 4px 4px;
	border-bottom-color: #666;
}

.board tbody tr {
	height: 16px;
	background: #cdf1ff;
}

.board tbody tr:nth-child(even) {
	background: #ccfbe3;
}

.board td {
	padding: 1px 0 0;
	color: #7c8284;
	vertical-align: top;
	white-space: nowrap;
}

.board tbody .x2 {
	height: 32px;
}

.board tbody .x3 {
	height: 48px;
}

.board .pic {
	padding: 0 0 0 44px;
	vertical-align: middle;
}

.pic svg {
	width: 16px;
	height: 14px;
}

.x2 .pic svg, .x3 .pic svg {
	height: 16px;
}

.board tbody .day {
	height: 21px;
}

.board .day td {
	padding-top: 0;
}

.board .day td + td {
	background: #0381c6;
	color: #00efff;
}

.day .icon16 {
	margin: 2px 0 0 2px;
	color: #345;
}

.board .free td {
	color: #000;
}

.board .busy td + td {
	background: #ffffb3;
	color: #d6000c;
}

.vscroll, .hscroll {
	display: flex;
	align-items: center;
	justify-content: space-between;
	padding: 6px 0;
}

.vscroll {
	flex-direction: column;
}

.hscroll {
	padding: 0 7px;
	margin-right: 1px;
}

.vscroll b {
	width: 8px;
	height: 98px;
	margin: 7px 0 auto;
	background: #b8b8b8;
}

.vscroll .long {
	height: 115px;
}

.hscroll b {
	width: 255px;
	height: 8px;
	margin: 0 auto 0 5px;
	background: #b8b8b8;
}

.vscroll i, .hscroll i {
	border: 3px solid transparent;
}

.vscroll .up {
	border-top: 0;
	border-bottom-color: #888;
}

.vscroll .down {
	border-bottom: 0;
	border-top-color: #888;
}

.hscroll .left {
	border-left: 0;
	border-right-color: #888;
}

.hscroll .right {
	border-right: 0;
	border-left-color: #888;
}

/* bottom */

.tabs {
	display: flex;
	height: 27px;
	padding-left: 1px;
}

.tab {
	display: flex;
	align-items: center;
	gap: 5px;
	padding: 0 9px;
	border: solid #b4b4b4;
	border-width: 0 1px 2px;
	border-bottom-color: #009fef;
	color: #009fef;
}

.tab svg {
	width: 15px;
	height: 13px;
}

.status {
	display: flex;
	align-items: center;
	height: 22px;
	padding-left: 6px;
}

.status div {
	display: flex;
	align-items: center;
	height: 15px;
	margin-right: 10px;
	border-right: 1px solid #b4b4b4;
}

.status span {
	flex: 1;
	padding-left: 16px;
}

.status .s-version {
	width: 114px;
}

.status .s-db {
	width: 126px;
}

.status .s-user {
	width: 133px;
}

.status .s-date {
	width: 109px;
}

.status .s-timer {
	width: 103px;
}

.resize {
	width: 12px;
	height: 12px;
	margin-left: auto;
	fill: #888;
}
```
